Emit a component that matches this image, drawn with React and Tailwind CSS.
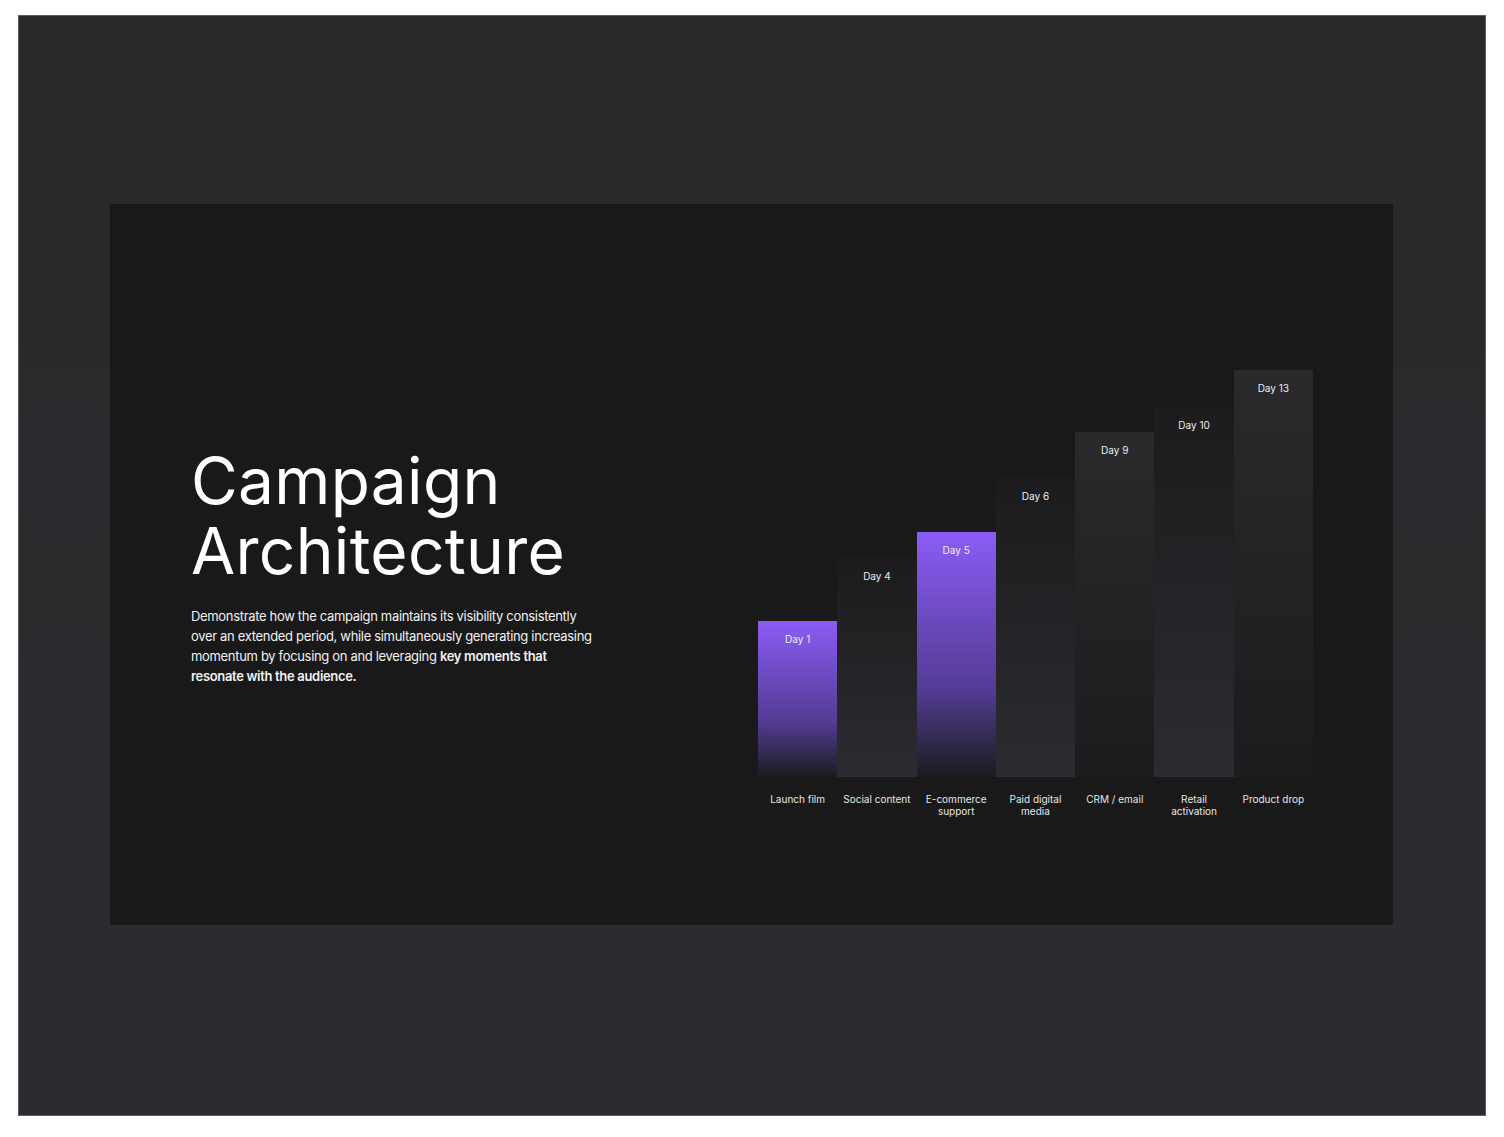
import React from 'react';

const bars = [
  { day: 'Day 1', label: ['Launch film'], h: 156, kind: 'purple' },
  { day: 'Day 4', label: ['Social content'], h: 219, kind: 'up' },
  { day: 'Day 5', label: ['E-commerce', 'support'], h: 245, kind: 'purple' },
  { day: 'Day 6', label: ['Paid digital', 'media'], h: 299, kind: 'up' },
  { day: 'Day 9', label: ['CRM / email'], h: 345, kind: 'down' },
  { day: 'Day 10', label: ['Retail', 'activation'], h: 370, kind: 'up' },
  { day: 'Day 13', label: ['Product drop'], h: 407, kind: 'down' },
];

const fills = {
  purple: 'bg-gradient-to-b from-[#8b5cf6] via-[#533b93] via-65% to-[#1c1b1f]',
  up: 'bg-gradient-to-b from-[#1c1c1e] to-[#2c2b30]',
  down: 'bg-gradient-to-b from-[#2a2a2d] to-[#1c1c1e]',
};

const Bar = ({ bar }) => (
  <div
    className={`w-full flex justify-center ${fills[bar.kind]}`}
    style={{ height: bar.h }}
  >
    <span className="pt-[11px] text-[10px] leading-[14px] text-[#ededed]">{bar.day}</span>
  </div>
);

const App = () => {
  return (
    <div className="w-full h-[1137px] bg-white overflow-hidden" style={{ fontFamily: 'Inter, "Liberation Sans", sans-serif' }}>
      <div className="ml-[18px] mt-[15px] w-[1468px] h-[1101px] border border-[#5c5c5e] bg-gradient-to-b from-[#29292b] to-[#2c2b30] pt-[188px] pl-[91px]">
        <div className="w-[1283px] h-[721px] bg-[#19191a] flex px-[81px]">
          <div className="pt-[242px] w-[420px]">
            <h1 className="text-[64px] leading-[70px] font-normal text-white tracking-[0.005em]">
              Campaign
              <br />
              Architecture
            </h1>
            <p className="mt-[20px] text-[13px] leading-[20px] text-[#f2f2f2] tracking-[-0.025em] whitespace-nowrap">
              Demonstrate how the campaign maintains its visibility consistently
              <br />
              over an extended period, while simultaneously generating increasing
              <br />
              momentum by focusing on and leveraging <span className="font-semibold">key moments that</span>
              <br />
              <span className="font-semibold">resonate with the audience.</span>
            </p>
          </div>
          <div className="ml-auto mr-[-1px] pt-[166px] w-[555px]">
            <div className="h-[407px] grid grid-cols-7 items-end">
              {bars.map((b) => (
                <Bar key={b.day} bar={b} />
              ))}
            </div>
            <div className="grid grid-cols-7 pt-[16px]">
              {bars.map((b) => (
                <div key={b.day} className="text-center text-[10px] leading-[12px] text-[#e6e6e6]">
                  {b.label.map((l) => (
                    <div key={l}>{l}</div>
                  ))}
                </div>
              ))}
            </div>
          </div>
        </div>
      </div>
    </div>
  );
};

export default App;
